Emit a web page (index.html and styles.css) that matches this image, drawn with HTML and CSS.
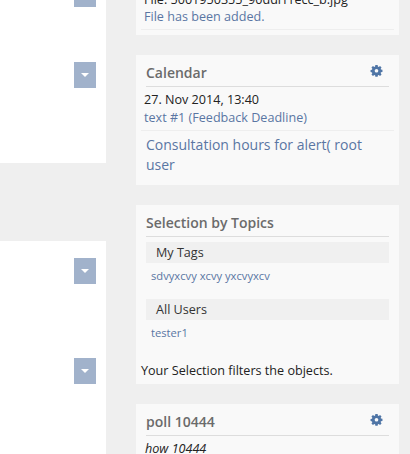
FILE: index.html
```html
<!DOCTYPE html>
<html lang="en">
<head>
<meta charset="utf-8">
<title>Dashboard</title>
<link rel="stylesheet" href="styles.css">
</head>
<body>
<div class="page">
  <div class="left">
    <div class="panel panel-a">
      <button class="drop drop-1"><span class="caret"></span></button>
      <button class="drop drop-2"><span class="caret"></span></button>
    </div>
    <div class="panel panel-b">
      <button class="drop drop-3"><span class="caret"></span></button>
      <button class="drop drop-4"><span class="caret"></span></button>
    </div>
  </div>
  <div class="right">
    <section class="card card-news">
      <div class="file">File: 5001950355_90ddrf1ecc_b.jpg</div>
      <div class="note">File has been added.</div>
    </section>
    <section class="card card-cal">
      <header class="head">
        <h2>Calendar</h2>
        <svg class="gear" viewBox="0 0 24 24"><path fill-rule="evenodd" d="M9.500 0h5l.6 3.400 1.700.7L19.700 2.200 23 5.500l-1.900 2.800.7 1.700 3.200.6v4.800l-3.200.6-.7 1.700 1.900 2.800-3.300 3.300-2.900-1.900-1.700.7-.6 3.300h-5l-.6-3.300-1.700-.7-2.900 1.900L1 20.600l1.900-2.800-.7-1.700L-1 15.500v-4.800l3.200-.6.7-1.700L1 5.500l3.300-3.300 2.900 1.900 1.700-.7zM12 8.500a4 4 0 1 0 0 8 4 4 0 0 0 0-8z"/></svg>
      </header>
      <div class="event">
        <div class="when">27. Nov 2014, 13:40</div>
        <div class="what">text #1 (Feedback Deadline)</div>
      </div>
      <div class="hours">Consultation hours for alert( root user</div>
    </section>
    <section class="card card-topics">
      <header class="head"><h2>Selection by Topics</h2></header>
      <div class="group">My Tags</div>
      <div class="tags">sdvyxcvy xcvy yxcvyxcv</div>
      <div class="group group-2">All Users</div>
      <div class="tags">tester1</div>
      <p class="hint">Your Selection filters the objects.</p>
    </section>
    <section class="card card-poll">
      <header class="head">
        <h2>poll 10444</h2>
        <svg class="gear" viewBox="0 0 24 24"><path fill-rule="evenodd" d="M9.500 0h5l.6 3.400 1.700.7L19.700 2.200 23 5.500l-1.900 2.800.7 1.700 3.200.6v4.800l-3.200.6-.7 1.700 1.900 2.800-3.300 3.300-2.900-1.900-1.700.7-.6 3.300h-5l-.6-3.300-1.700-.7-2.900 1.900L1 20.600l1.900-2.800-.7-1.700L-1 15.500v-4.800l3.200-.6.7-1.700L1 5.500l3.300-3.300 2.900 1.900 1.700-.7zM12 8.500a4 4 0 1 0 0 8 4 4 0 0 0 0-8z"/></svg>
      </header>
      <div class="question">how 10444</div>
    </section>
  </div>
</div>
</body>
</html>
```

FILE: styles.css
```css
html, body {
  margin: 0;
  height: 454px;
  overflow: hidden;
  background: #efefef;
}
body {
  font-family: "Open Sans", "Liberation Sans", sans-serif;
  font-size: 12.6px;
  color: #222;
}
.page {
  display: flex;
  gap: 30px;
  width: 410px;
  height: 454px;
  overflow: hidden;
}
.left {
  width: 106px;
  flex: none;
  display: flex;
  flex-direction: column;
  gap: 78px;
}
.panel {
  background: #fff;
  display: flex;
  flex-direction: column;
  align-items: flex-end;
  padding-right: 10px;
}
.panel-a { height: 163px; }
.panel-b { height: 213px; padding-top: 17px; box-sizing: border-box; }
.drop {
  width: 22px;
  height: 26px;
  padding: 0;
  border: 0;
  background: #a1b2cb;
  display: flex;
  align-items: center;
  justify-content: center;
  flex: none;
}
.drop-1 { margin-top: -19px; }
.drop-2 { margin-top: 55px; }
.drop-4 { margin-top: 74px; }
.caret {
  width: 0;
  height: 0;
  border-left: 4px solid transparent;
  border-right: 4px solid transparent;
  border-top: 4px solid #fff;
}
.right {
  width: 263px;
  flex: none;
  display: flex;
  flex-direction: column;
  gap: 20px;
}
.card { background: #f9f9f9; flex: none; }
.card-news {
  height: 35px;
  box-sizing: border-box;
  padding-left: 8px;
  overflow: hidden;
}
.file {
  margin-top: -8px;
  line-height: 16px;
}
.note {
  line-height: 16px;
  color: #5a76a3;
  margin-top: 1px;
  padding-bottom: 4px;
  margin-left: -3px;
  padding-left: 3px;
  margin-right: 5px;
  border-bottom: 1px solid #eee;
}
.head {
  margin: 0 10px;
  height: 32px;
  padding-top: 4px;
  box-sizing: border-box;
  border-bottom: 1px solid #ddd;
  display: flex;
  justify-content: space-between;
  align-items: center;
}
.head h2 {
  margin: 0;
  font-size: 14px;
  font-weight: 600;
  color: #6b6b6b;
}
.gear {
  width: 11px;
  height: 11px;
  fill: #4f75a6;
  overflow: visible;
  margin: -4px 7px 0 0;
}
.event {
  margin: 0 5px;
  padding: 4px 3px 3px;
  border-bottom: 1px solid #eee;
}
.when { line-height: 18px; color: #222; }
.what { line-height: 18px; color: #5a76a3; }
.hours {
  margin: 0 10px;
  padding: 4px 0 10px;
  font-size: 14px;
  line-height: 20px;
  color: #5a76a3;
}
.group {
  margin: 5px 10px 0;
  height: 21px;
  line-height: 21px;
  background: #f0f0f0;
  padding-left: 10px;
  color: #333;
}
.group-2 { margin-top: 15px; }
.tags {
  margin: 5px 15px 0;
  font-size: 11.2px;
  line-height: 16px;
  color: #5a76a3;
}
.hint {
  margin: 21px 0 0 5px;
  line-height: 17px;
  color: #222;
}
.card-topics { height: 179px; }
.card-poll { height: 80px; }
.question {
  margin: 4px 9px;
  font-style: italic;
  line-height: 18px;
}
```
